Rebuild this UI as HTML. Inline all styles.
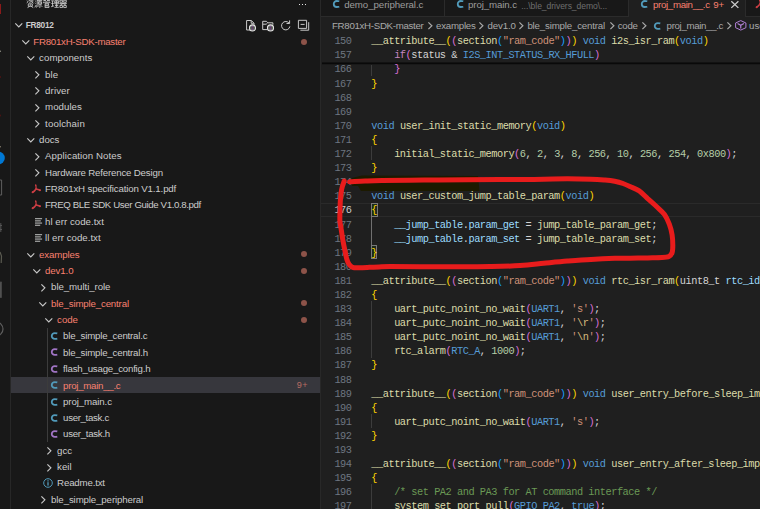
<!DOCTYPE html>
<html><head><meta charset="utf-8"><title>vscode</title>
<style>
html,body{margin:0;padding:0;width:760px;height:509px;overflow:hidden;background:#181818;}
#r{position:absolute;left:0;top:0;width:760px;height:509px;overflow:hidden;background:#181818;}
body{position:relative;font-family:"Liberation Sans",sans-serif;}
.abs{position:absolute;}
.t{position:absolute;white-space:pre;font-family:"Liberation Sans",sans-serif;}
.sb{font-size:9.7px;height:16.34px;line-height:16.34px;}
.m{position:absolute;z-index:2;white-space:pre;font-family:"Liberation Mono",monospace;}
svg{position:absolute;overflow:visible;}
</style></head><body><div id="r">

<div class="abs" style="left:0;top:0;width:10px;height:509px;background:#181818;"></div>
<div class="abs" style="left:10px;top:0;width:1px;height:509px;background:#272727;"></div>
<div class="abs" style="left:319.6px;top:0;width:1.2px;height:509px;background:#282828;"></div>
<div class="abs" style="left:320.8px;top:0;width:439.2px;height:509px;background:#1f1f1f;"></div>
<div class="abs" style="left:11px;top:377px;width:309px;height:16px;background:#37373d;"></div>
<div class="abs" style="left:47px;top:328px;width:1px;height:114px;background:#3c3c3c;"></div>
<div class="t sb" style="left:25.85px;top:17.38px;color:#cccccc;font-weight:bold;font-size:8.3px;letter-spacing:-0.314px;">FR8012</div>
<svg style="left:14.7px;top:23.45px" width="7.6" height="4.6" viewBox="0 0 7.6 4.6"><path d="M0.3 0.4 L3.8 3.9 L7.3 0.4" fill="none" stroke="#c8c8c8" stroke-width="1.15"/></svg>
<div class="t sb" style="left:33.35px;top:34.13px;color:#f88070;letter-spacing:-0.270px;">FR801xH-SDK-master</div>
<svg style="left:21.7px;top:40.199999999999996px" width="7.6" height="4.6" viewBox="0 0 7.6 4.6"><path d="M0.3 0.4 L3.8 3.9 L7.3 0.4" fill="none" stroke="#c8c8c8" stroke-width="1.15"/></svg>
<div class="t sb" style="left:39.10px;top:50.38px;color:#cccccc;letter-spacing:0.052px;">components</div>
<svg style="left:27.45px;top:56.449999999999996px" width="7.6" height="4.6" viewBox="0 0 7.6 4.6"><path d="M0.3 0.4 L3.8 3.9 L7.3 0.4" fill="none" stroke="#c8c8c8" stroke-width="1.15"/></svg>
<div class="t sb" style="left:45.10px;top:66.63px;color:#cccccc;letter-spacing:0.038px;">ble</div>
<svg style="left:34.8px;top:71.0px" width="4.6" height="7.6" viewBox="0 0 4.6 7.6"><path d="M0.4 0.3 L3.9 3.8 L0.4 7.3" fill="none" stroke="#c8c8c8" stroke-width="1.15"/></svg>
<div class="t sb" style="left:45.10px;top:82.88px;color:#cccccc;letter-spacing:0.094px;">driver</div>
<svg style="left:34.8px;top:87.25px" width="4.6" height="7.6" viewBox="0 0 4.6 7.6"><path d="M0.4 0.3 L3.9 3.8 L0.4 7.3" fill="none" stroke="#c8c8c8" stroke-width="1.15"/></svg>
<div class="t sb" style="left:45.10px;top:99.13px;color:#cccccc;letter-spacing:0.025px;">modules</div>
<svg style="left:34.8px;top:103.5px" width="4.6" height="7.6" viewBox="0 0 4.6 7.6"><path d="M0.4 0.3 L3.9 3.8 L0.4 7.3" fill="none" stroke="#c8c8c8" stroke-width="1.15"/></svg>
<div class="t sb" style="left:45.10px;top:115.63px;color:#cccccc;letter-spacing:0.113px;">toolchain</div>
<svg style="left:34.8px;top:120.0px" width="4.6" height="7.6" viewBox="0 0 4.6 7.6"><path d="M0.4 0.3 L3.9 3.8 L0.4 7.3" fill="none" stroke="#c8c8c8" stroke-width="1.15"/></svg>
<div class="t sb" style="left:39.10px;top:132.13px;color:#cccccc;letter-spacing:-0.042px;">docs</div>
<svg style="left:27.45px;top:138.20000000000002px" width="7.6" height="4.6" viewBox="0 0 7.6 4.6"><path d="M0.3 0.4 L3.8 3.9 L7.3 0.4" fill="none" stroke="#c8c8c8" stroke-width="1.15"/></svg>
<div class="t sb" style="left:45.10px;top:148.38px;color:#cccccc;letter-spacing:0.068px;">Application Notes</div>
<svg style="left:34.8px;top:152.75px" width="4.6" height="7.6" viewBox="0 0 4.6 7.6"><path d="M0.4 0.3 L3.9 3.8 L0.4 7.3" fill="none" stroke="#c8c8c8" stroke-width="1.15"/></svg>
<div class="t sb" style="left:45.10px;top:164.63px;color:#cccccc;letter-spacing:-0.177px;">Hardware Reference Design</div>
<svg style="left:34.8px;top:169.0px" width="4.6" height="7.6" viewBox="0 0 4.6 7.6"><path d="M0.4 0.3 L3.9 3.8 L0.4 7.3" fill="none" stroke="#c8c8c8" stroke-width="1.15"/></svg>
<div class="t sb" style="left:45.10px;top:181.13px;color:#cccccc;letter-spacing:-0.155px;">FR801xH specification V1.1.pdf</div>
<svg style="left:24.30px;top:182.70px" width="12" height="12" viewBox="-12 -6 12 12"><g fill="none" stroke="#cc3e44" stroke-linecap="round"><path d="M-0.3 -4.0 Q0.4 -1.6 0 0" stroke-width="1.2"/><path d="M0 0 Q-1.4 2.3 -3.5 3.3" stroke-width="1.5"/><path d="M0 0 Q2 0.3 4.1 1.3" stroke-width="1.5"/></g><circle cx="-3.3" cy="3.2" r="1.0" fill="#cc3e44"/><circle cx="3.9" cy="1.25" r="1.0" fill="#cc3e44"/><circle cx="-0.3" cy="-3.8" r="0.75" fill="#cc3e44"/></svg>
<div class="t sb" style="left:45.10px;top:197.38px;color:#cccccc;letter-spacing:-0.391px;">FREQ BLE SDK User Guide V1.0.8.pdf</div>
<svg style="left:24.30px;top:198.95px" width="12" height="12" viewBox="-12 -6 12 12"><g fill="none" stroke="#cc3e44" stroke-linecap="round"><path d="M-0.3 -4.0 Q0.4 -1.6 0 0" stroke-width="1.2"/><path d="M0 0 Q-1.4 2.3 -3.5 3.3" stroke-width="1.5"/><path d="M0 0 Q2 0.3 4.1 1.3" stroke-width="1.5"/></g><circle cx="-3.3" cy="3.2" r="1.0" fill="#cc3e44"/><circle cx="3.9" cy="1.25" r="1.0" fill="#cc3e44"/><circle cx="-0.3" cy="-3.8" r="0.75" fill="#cc3e44"/></svg>
<div class="t sb" style="left:45.10px;top:213.88px;color:#cccccc;letter-spacing:0.006px;">hl err code.txt</div>
<svg style="left:35.0px;top:217.55px" width="7.4" height="8" viewBox="0 0 7.4 8"><rect x="0" y="0.33" width="7.1" height="0.84" fill="#e2e4e3"/><rect x="0" y="2.48" width="5.8" height="0.84" fill="#e2e4e3"/><rect x="0" y="4.63" width="7.1" height="0.84" fill="#e2e4e3"/><rect x="0" y="6.78" width="5.2" height="0.84" fill="#e2e4e3"/></svg>
<div class="t sb" style="left:45.10px;top:230.13px;color:#cccccc;letter-spacing:0.006px;">ll err code.txt</div>
<svg style="left:35.0px;top:233.8px" width="7.4" height="8" viewBox="0 0 7.4 8"><rect x="0" y="0.33" width="7.1" height="0.84" fill="#e2e4e3"/><rect x="0" y="2.48" width="5.8" height="0.84" fill="#e2e4e3"/><rect x="0" y="4.63" width="7.1" height="0.84" fill="#e2e4e3"/><rect x="0" y="6.78" width="5.2" height="0.84" fill="#e2e4e3"/></svg>
<div class="t sb" style="left:39.10px;top:246.63px;color:#f88070;letter-spacing:-0.146px;">examples</div>
<svg style="left:27.45px;top:252.70000000000002px" width="7.6" height="4.6" viewBox="0 0 7.6 4.6"><path d="M0.3 0.4 L3.8 3.9 L7.3 0.4" fill="none" stroke="#c8c8c8" stroke-width="1.15"/></svg>
<div class="t sb" style="left:45.10px;top:262.88px;color:#f88070;letter-spacing:-0.132px;">dev1.0</div>
<svg style="left:33.2px;top:268.95px" width="7.6" height="4.6" viewBox="0 0 7.6 4.6"><path d="M0.3 0.4 L3.8 3.9 L7.3 0.4" fill="none" stroke="#c8c8c8" stroke-width="1.15"/></svg>
<div class="t sb" style="left:51.10px;top:279.13px;color:#cccccc;letter-spacing:-0.072px;">ble_multi_role</div>
<svg style="left:40.55px;top:283.5px" width="4.6" height="7.6" viewBox="0 0 4.6 7.6"><path d="M0.4 0.3 L3.9 3.8 L0.4 7.3" fill="none" stroke="#c8c8c8" stroke-width="1.15"/></svg>
<div class="t sb" style="left:51.10px;top:295.63px;color:#f88070;letter-spacing:-0.166px;">ble_simple_central</div>
<svg style="left:39.2px;top:301.7px" width="7.6" height="4.6" viewBox="0 0 7.6 4.6"><path d="M0.3 0.4 L3.8 3.9 L7.3 0.4" fill="none" stroke="#c8c8c8" stroke-width="1.15"/></svg>
<div class="t sb" style="left:57.10px;top:311.88px;color:#f88070;letter-spacing:-0.054px;">code</div>
<svg style="left:45.45px;top:317.95px" width="7.6" height="4.6" viewBox="0 0 7.6 4.6"><path d="M0.3 0.4 L3.8 3.9 L7.3 0.4" fill="none" stroke="#c8c8c8" stroke-width="1.15"/></svg>
<div class="t sb" style="left:63.10px;top:328.38px;color:#cccccc;letter-spacing:-0.201px;">ble_simple_central.c</div>
<svg style="left:54.30px;top:336.15px" width="1" height="1" viewBox="0 0 1 1"><path d="M3.3 -2.6 Q2.4 -2.85 0.75 -2.85 A3.0 2.85 0 0 0 -2.25 0 A3.0 2.85 0 0 0 0.75 2.85 Q2.4 2.85 3.3 2.6" fill="none" stroke="#519aba" stroke-width="1.8"/></svg>
<div class="t sb" style="left:63.10px;top:344.63px;color:#cccccc;letter-spacing:-0.203px;">ble_simple_central.h</div>
<svg style="left:54.30px;top:352.40px" width="1" height="1" viewBox="0 0 1 1"><path d="M3.3 -2.6 Q2.4 -2.85 0.75 -2.85 A3.0 2.85 0 0 0 -2.25 0 A3.0 2.85 0 0 0 0.75 2.85 Q2.4 2.85 3.3 2.6" fill="none" stroke="#a074c4" stroke-width="1.8"/></svg>
<div class="t sb" style="left:63.10px;top:361.13px;color:#cccccc;letter-spacing:-0.214px;">flash_usage_config.h</div>
<svg style="left:54.30px;top:368.90px" width="1" height="1" viewBox="0 0 1 1"><path d="M3.3 -2.6 Q2.4 -2.85 0.75 -2.85 A3.0 2.85 0 0 0 -2.25 0 A3.0 2.85 0 0 0 0.75 2.85 Q2.4 2.85 3.3 2.6" fill="none" stroke="#a074c4" stroke-width="1.8"/></svg>
<div class="t sb" style="left:63.10px;top:377.63px;color:#f88070;letter-spacing:-0.274px;">proj_main__.c</div>
<svg style="left:54.30px;top:385.40px" width="1" height="1" viewBox="0 0 1 1"><path d="M3.3 -2.6 Q2.4 -2.85 0.75 -2.85 A3.0 2.85 0 0 0 -2.25 0 A3.0 2.85 0 0 0 0.75 2.85 Q2.4 2.85 3.3 2.6" fill="none" stroke="#519aba" stroke-width="1.8"/></svg>
<div class="t sb" style="left:63.10px;top:393.88px;color:#cccccc;letter-spacing:-0.116px;">proj_main.c</div>
<svg style="left:54.30px;top:401.65px" width="1" height="1" viewBox="0 0 1 1"><path d="M3.3 -2.6 Q2.4 -2.85 0.75 -2.85 A3.0 2.85 0 0 0 -2.25 0 A3.0 2.85 0 0 0 0.75 2.85 Q2.4 2.85 3.3 2.6" fill="none" stroke="#519aba" stroke-width="1.8"/></svg>
<div class="t sb" style="left:63.10px;top:410.13px;color:#cccccc;letter-spacing:-0.341px;">user_task.c</div>
<svg style="left:54.30px;top:417.90px" width="1" height="1" viewBox="0 0 1 1"><path d="M3.3 -2.6 Q2.4 -2.85 0.75 -2.85 A3.0 2.85 0 0 0 -2.25 0 A3.0 2.85 0 0 0 0.75 2.85 Q2.4 2.85 3.3 2.6" fill="none" stroke="#519aba" stroke-width="1.8"/></svg>
<div class="t sb" style="left:63.10px;top:426.38px;color:#cccccc;letter-spacing:-0.299px;">user_task.h</div>
<svg style="left:54.30px;top:434.15px" width="1" height="1" viewBox="0 0 1 1"><path d="M3.3 -2.6 Q2.4 -2.85 0.75 -2.85 A3.0 2.85 0 0 0 -2.25 0 A3.0 2.85 0 0 0 0.75 2.85 Q2.4 2.85 3.3 2.6" fill="none" stroke="#a074c4" stroke-width="1.8"/></svg>
<div class="t sb" style="left:57.10px;top:442.63px;color:#cccccc;letter-spacing:-0.093px;">gcc</div>
<svg style="left:46.55px;top:447.0px" width="4.6" height="7.6" viewBox="0 0 4.6 7.6"><path d="M0.4 0.3 L3.9 3.8 L0.4 7.3" fill="none" stroke="#c8c8c8" stroke-width="1.15"/></svg>
<div class="t sb" style="left:57.10px;top:459.13px;color:#cccccc;letter-spacing:0.001px;">keil</div>
<svg style="left:46.55px;top:463.5px" width="4.6" height="7.6" viewBox="0 0 4.6 7.6"><path d="M0.4 0.3 L3.9 3.8 L0.4 7.3" fill="none" stroke="#c8c8c8" stroke-width="1.15"/></svg>
<div class="t sb" style="left:57.10px;top:475.38px;color:#cccccc;letter-spacing:-0.175px;">Readme.txt</div>
<svg style="left:42.7px;top:478.25px" width="10" height="10" viewBox="0 0 10 10"><circle cx="5" cy="5" r="4.3" fill="none" stroke="#519aba" stroke-width="1"/><rect x="4.4" y="4.2" width="1.2" height="3.4" fill="#5aa6c8"/><rect x="4.4" y="2.3" width="1.2" height="1.2" fill="#5aa6c8"/></svg>
<div class="t sb" style="left:51.10px;top:491.63px;color:#cccccc;letter-spacing:-0.130px;">ble_simple_peripheral</div>
<svg style="left:40.55px;top:496.0px" width="4.6" height="7.6" viewBox="0 0 4.6 7.6"><path d="M0.4 0.3 L3.9 3.8 L0.4 7.3" fill="none" stroke="#c8c8c8" stroke-width="1.15"/></svg>
<div class="abs" style="left:301px;top:38.5px;width:6px;height:6px;border-radius:50%;background:#8d5349;"></div>
<div class="abs" style="left:301px;top:250.8px;width:6px;height:6px;border-radius:50%;background:#8d5349;"></div>
<div class="abs" style="left:301px;top:267.5px;width:6px;height:6px;border-radius:50%;background:#8d5349;"></div>
<div class="abs" style="left:301px;top:300.2px;width:6px;height:6px;border-radius:50%;background:#8d5349;"></div>
<div class="abs" style="left:301px;top:316.5px;width:6px;height:6px;border-radius:50%;background:#8d5349;"></div>
<div class="t sb" style="left:296.7px;top:377.43px;color:#b86c62;font-size:9px;letter-spacing:0.517px;">9+</div>
<div class="abs" style="left:321px;top:0;width:439px;height:16px;background:#181818;"></div>
<div class="abs" style="left:321px;top:15.5px;width:439px;height:1px;background:#2b2b2b;"></div>
<div class="abs" style="left:444px;top:0;width:1px;height:16px;background:#2b2b2b;"></div>
<div class="abs" style="left:628.8px;top:0;width:116.2px;height:17px;background:#1f1f1f;"></div>
<div class="abs" style="left:627.8px;top:0;width:1px;height:16px;background:#2b2b2b;"></div>
<div class="abs" style="left:745px;top:0;width:1px;height:16px;background:#2b2b2b;"></div>
<svg style="left:335.60px;top:3.50px" width="1" height="1" viewBox="0 0 1 1"><path d="M3.3 -2.75 Q2.4 -3.0 0.75 -3.0 A3.0 3.0 0 0 0 -2.25 0 A3.0 3.0 0 0 0 0.75 3.0 Q2.4 3.0 3.3 2.75" fill="none" stroke="#519aba" stroke-width="1.8"/></svg>
<div class="t" style="left:344.20px;top:-2.90px;height:16px;line-height:16px;font-size:9.7px;color:#9d9d9d;letter-spacing:-0.062px;">demo_peripheral.c</div>
<svg style="left:459.80px;top:3.50px" width="1" height="1" viewBox="0 0 1 1"><path d="M3.3 -2.75 Q2.4 -3.0 0.75 -3.0 A3.0 3.0 0 0 0 -2.25 0 A3.0 3.0 0 0 0 0.75 3.0 Q2.4 3.0 3.3 2.75" fill="none" stroke="#519aba" stroke-width="1.8"/></svg>
<div class="t" style="left:468.10px;top:-2.90px;height:16px;line-height:16px;font-size:9.7px;color:#9d9d9d;letter-spacing:-0.116px;">proj_main.c</div>
<div class="t" style="left:521.30px;top:-2.50px;height:16px;line-height:16px;font-size:8.6px;color:#6e6e6e;letter-spacing:-0.068px;">...\ble_drivers_demo\...</div>
<svg style="left:644.20px;top:3.50px" width="1" height="1" viewBox="0 0 1 1"><path d="M3.3 -2.75 Q2.4 -3.0 0.75 -3.0 A3.0 3.0 0 0 0 -2.25 0 A3.0 3.0 0 0 0 0.75 3.0 Q2.4 3.0 3.3 2.75" fill="none" stroke="#519aba" stroke-width="1.8"/></svg>
<div class="t" style="left:652.90px;top:-2.90px;height:16px;line-height:16px;font-size:9.7px;color:#f88070;letter-spacing:-0.305px;">proj_main__.c</div>
<div class="t" style="left:713.30px;top:-2.90px;height:16px;line-height:16px;font-size:9.7px;color:#f88070;letter-spacing:-0.123px;">9+</div>
<svg style="left:731px;top:0.8px" width="7.7" height="7.2" viewBox="0 0 7.7 7.2"><path d="M0.3 0.3 L7.4 6.9 M7.4 0.3 L0.3 6.9" stroke="#cccccc" stroke-width="1.3" fill="none"/></svg>
<svg style="left:748.40px;top:-2.30px" width="12" height="12" viewBox="-12 -6 12 12"><g fill="none" stroke="#cc3e44" stroke-linecap="round"><path d="M-0.3 -4.0 Q0.4 -1.6 0 0" stroke-width="1.2"/><path d="M0 0 Q-1.4 2.3 -3.5 3.3" stroke-width="1.5"/><path d="M0 0 Q2 0.3 4.1 1.3" stroke-width="1.5"/></g><circle cx="-3.3" cy="3.2" r="1.0" fill="#cc3e44"/><circle cx="3.9" cy="1.25" r="1.0" fill="#cc3e44"/><circle cx="-0.3" cy="-3.8" r="0.75" fill="#cc3e44"/></svg>
<div class="t" style="left:332.00px;top:17.60px;height:16px;line-height:16px;font-size:9.7px;color:#a9a9a9;letter-spacing:-0.300px;">FR801xH-SDK-master</div>
<svg style="left:428.2px;top:21.700000000000003px" width="4.6" height="7.6" viewBox="0 0 4.6 7.6"><path d="M0.4 0.4 L3.9 3.8 L0.4 7.2" fill="none" stroke="#a9a9a9" stroke-width="1.2"/></svg>
<div class="t" style="left:436.00px;top:17.60px;height:16px;line-height:16px;font-size:9.7px;color:#a9a9a9;letter-spacing:-0.234px;">examples</div>
<svg style="left:478.8px;top:21.700000000000003px" width="4.6" height="7.6" viewBox="0 0 4.6 7.6"><path d="M0.4 0.4 L3.9 3.8 L0.4 7.2" fill="none" stroke="#a9a9a9" stroke-width="1.2"/></svg>
<div class="t" style="left:487.50px;top:17.60px;height:16px;line-height:16px;font-size:9.7px;color:#a9a9a9;letter-spacing:-0.116px;">dev1.0</div>
<svg style="left:519.4000000000001px;top:21.700000000000003px" width="4.6" height="7.6" viewBox="0 0 4.6 7.6"><path d="M0.4 0.4 L3.9 3.8 L0.4 7.2" fill="none" stroke="#a9a9a9" stroke-width="1.2"/></svg>
<div class="t" style="left:527.40px;top:17.60px;height:16px;line-height:16px;font-size:9.7px;color:#a9a9a9;letter-spacing:-0.177px;">ble_simple_central</div>
<svg style="left:609.8000000000001px;top:21.700000000000003px" width="4.6" height="7.6" viewBox="0 0 4.6 7.6"><path d="M0.4 0.4 L3.9 3.8 L0.4 7.2" fill="none" stroke="#a9a9a9" stroke-width="1.2"/></svg>
<div class="t" style="left:617.70px;top:17.60px;height:16px;line-height:16px;font-size:9.7px;color:#a9a9a9;letter-spacing:-0.254px;">code</div>
<svg style="left:642.1px;top:21.700000000000003px" width="4.6" height="7.6" viewBox="0 0 4.6 7.6"><path d="M0.4 0.4 L3.9 3.8 L0.4 7.2" fill="none" stroke="#a9a9a9" stroke-width="1.2"/></svg>
<svg style="left:657.20px;top:25.70px" width="1" height="1" viewBox="0 0 1 1"><path d="M3.3 -2.6 Q2.4 -2.85 0.75 -2.85 A3.0 2.85 0 0 0 -2.25 0 A3.0 2.85 0 0 0 0.75 2.85 Q2.4 2.85 3.3 2.6" fill="none" stroke="#519aba" stroke-width="1.8"/></svg>
<div class="t" style="left:666.60px;top:17.60px;height:16px;line-height:16px;font-size:9.7px;color:#a9a9a9;letter-spacing:-0.335px;">proj_main__.c</div>
<svg style="left:727.4000000000001px;top:21.700000000000003px" width="4.6" height="7.6" viewBox="0 0 4.6 7.6"><path d="M0.4 0.4 L3.9 3.8 L0.4 7.2" fill="none" stroke="#a9a9a9" stroke-width="1.2"/></svg>
<svg style="left:735.2px;top:20px" width="11.5" height="10.7" viewBox="0 0 11.5 10.7"><path d="M5.75 0.6 L10.9 3 L10.9 7.7 L5.75 10.1 L0.6 7.7 L0.6 3 Z" fill="none" stroke="#b180d7" stroke-width="1" stroke-linejoin="round"/><path d="M2.6 3.6 L5.75 5.4 L8.9 3.6 M5.75 5.4 L5.75 8.6" fill="none" stroke="#b180d7" stroke-width="1.2"/></svg>
<div class="t" style="left:749.10px;top:17.60px;height:16px;line-height:16px;font-size:9.7px;color:#a9a9a9;letter-spacing:0.000px;">user_custom_jump_table_param</div>
<style>.m{font-size:10.3px;letter-spacing:-0.4680px;height:14.097px;line-height:14.097px;}.ln{color:#6e7681;text-align:right;width:30px;left:321.53px;}</style>
<div class="abs" style="left:321px;top:203px;width:439px;height:1px;background:#2a2a2a;"></div>
<div class="abs" style="left:321px;top:216px;width:439px;height:1px;background:#2a2a2a;"></div>
<div class="m ln" style="top:34.45px;color:#6e7681;">150</div>
<div class="m" style="left:371.3px;top:34.45px;"><span style="color:#dcdcaa">__attribute__</span><span style="color:#ffd700">(</span><span style="color:#da70d6">(</span><span style="color:#dcdcaa">section</span><span style="color:#179fff">(</span><span style="color:#ce9178">&quot;ram_code&quot;</span><span style="color:#179fff">)</span><span style="color:#da70d6">)</span><span style="color:#ffd700">)</span><span style="color:#d4d4d4"> </span><span style="color:#569cd6">void</span><span style="color:#d4d4d4"> </span><span style="color:#dcdcaa">i2s_isr_ram</span><span style="color:#ffd700">(</span><span style="color:#569cd6">void</span><span style="color:#ffd700">)</span></div>
<div class="m ln" style="top:48.35px;color:#6e7681;">157</div>
<div class="m" style="left:371.3px;top:48.35px;"><span style="color:#d4d4d4">    </span><span style="color:#c586c0">if</span><span style="color:#da70d6">(</span><span style="color:#d4d4d4">status &amp; </span><span style="color:#569cd6">I2S_INT_STATUS_RX_HFULL</span><span style="color:#da70d6">)</span></div>
<div class="m ln" style="top:62.45px;color:#6e7681;">166</div>
<div class="m" style="left:371.3px;top:62.45px;"><span style="color:#d4d4d4">    </span><span style="color:#da70d6">}</span></div>
<div class="m ln" style="top:76.55px;color:#6e7681;">167</div>
<div class="m" style="left:371.3px;top:76.55px;"><span style="color:#ffd700">}</span></div>
<div class="m ln" style="top:90.65px;color:#6e7681;">168</div>
<div class="m ln" style="top:104.74px;color:#6e7681;">169</div>
<div class="m ln" style="top:118.84px;color:#6e7681;">170</div>
<div class="m" style="left:371.3px;top:118.84px;"><span style="color:#569cd6">void</span><span style="color:#d4d4d4"> </span><span style="color:#dcdcaa">user_init_static_memory</span><span style="color:#ffd700">(</span><span style="color:#569cd6">void</span><span style="color:#ffd700">)</span></div>
<div class="m ln" style="top:132.94px;color:#6e7681;">171</div>
<div class="m" style="left:371.3px;top:132.94px;"><span style="color:#ffd700">{</span></div>
<div class="m ln" style="top:147.03px;color:#6e7681;">172</div>
<div class="m" style="left:371.3px;top:147.03px;"><span style="color:#d4d4d4">    </span><span style="color:#dcdcaa">initial_static_memory</span><span style="color:#da70d6">(</span><span style="color:#b5cea8">6</span><span style="color:#d4d4d4">, </span><span style="color:#b5cea8">2</span><span style="color:#d4d4d4">, </span><span style="color:#b5cea8">3</span><span style="color:#d4d4d4">, </span><span style="color:#b5cea8">8</span><span style="color:#d4d4d4">, </span><span style="color:#b5cea8">256</span><span style="color:#d4d4d4">, </span><span style="color:#b5cea8">10</span><span style="color:#d4d4d4">, </span><span style="color:#b5cea8">256</span><span style="color:#d4d4d4">, </span><span style="color:#b5cea8">254</span><span style="color:#d4d4d4">, </span><span style="color:#b5cea8">0x800</span><span style="color:#da70d6">)</span><span style="color:#d4d4d4">;</span></div>
<div class="m ln" style="top:161.13px;color:#6e7681;">173</div>
<div class="m" style="left:371.3px;top:161.13px;"><span style="color:#ffd700">}</span></div>
<div class="m ln" style="top:175.23px;color:#6e7681;">174</div>
<div class="m ln" style="top:189.32px;color:#6e7681;">175</div>
<div class="m" style="left:371.3px;top:189.32px;"><span style="color:#569cd6">void</span><span style="color:#d4d4d4"> </span><span style="color:#dcdcaa">user_custom_jump_table_param</span><span style="color:#ffd700">(</span><span style="color:#569cd6">void</span><span style="color:#ffd700">)</span></div>
<div class="m ln" style="top:203.42px;color:#cccccc;">176</div>
<div class="m" style="left:371.3px;top:203.42px;"><span style="color:#ffd700">{</span></div>
<div class="m ln" style="top:217.52px;color:#6e7681;">177</div>
<div class="m" style="left:371.3px;top:217.52px;"><span style="color:#d4d4d4">    </span><span style="color:#9cdcfe">__jump_table</span><span style="color:#d4d4d4">.</span><span style="color:#9cdcfe">param_get</span><span style="color:#d4d4d4"> = </span><span style="color:#dcdcaa">jump_table_param_get</span><span style="color:#d4d4d4">;</span></div>
<div class="m ln" style="top:231.62px;color:#6e7681;">178</div>
<div class="m" style="left:371.3px;top:231.62px;"><span style="color:#d4d4d4">    </span><span style="color:#9cdcfe">__jump_table</span><span style="color:#d4d4d4">.</span><span style="color:#9cdcfe">param_set</span><span style="color:#d4d4d4"> = </span><span style="color:#dcdcaa">jump_table_param_set</span><span style="color:#d4d4d4">;</span></div>
<div class="m ln" style="top:245.71px;color:#6e7681;">179</div>
<div class="m" style="left:371.3px;top:245.71px;"><span style="color:#ffd700">}</span></div>
<div class="m ln" style="top:259.81px;color:#6e7681;">180</div>
<div class="m ln" style="top:273.91px;color:#6e7681;">181</div>
<div class="m" style="left:371.3px;top:273.91px;"><span style="color:#dcdcaa">__attribute__</span><span style="color:#ffd700">(</span><span style="color:#da70d6">(</span><span style="color:#dcdcaa">section</span><span style="color:#179fff">(</span><span style="color:#ce9178">&quot;ram_code&quot;</span><span style="color:#179fff">)</span><span style="color:#da70d6">)</span><span style="color:#ffd700">)</span><span style="color:#d4d4d4"> </span><span style="color:#569cd6">void</span><span style="color:#d4d4d4"> </span><span style="color:#dcdcaa">rtc_isr_ram</span><span style="color:#ffd700">(</span><span style="color:#d4d4d4">uint8_t</span><span style="color:#d4d4d4"> </span><span style="color:#9cdcfe">rtc_idx</span><span style="color:#ffd700">)</span></div>
<div class="m ln" style="top:288.00px;color:#6e7681;">182</div>
<div class="m" style="left:371.3px;top:288.00px;"><span style="color:#ffd700">{</span></div>
<div class="m ln" style="top:302.10px;color:#6e7681;">183</div>
<div class="m" style="left:371.3px;top:302.10px;"><span style="color:#d4d4d4">    </span><span style="color:#dcdcaa">uart_putc_noint_no_wait</span><span style="color:#da70d6">(</span><span style="color:#569cd6">UART1</span><span style="color:#d4d4d4">, </span><span style="color:#ce9178">&#x27;s&#x27;</span><span style="color:#da70d6">)</span><span style="color:#d4d4d4">;</span></div>
<div class="m ln" style="top:316.20px;color:#6e7681;">184</div>
<div class="m" style="left:371.3px;top:316.20px;"><span style="color:#d4d4d4">    </span><span style="color:#dcdcaa">uart_putc_noint_no_wait</span><span style="color:#da70d6">(</span><span style="color:#569cd6">UART1</span><span style="color:#d4d4d4">, </span><span style="color:#ce9178">&#x27;</span><span style="color:#d7ba7d">\r</span><span style="color:#ce9178">&#x27;</span><span style="color:#da70d6">)</span><span style="color:#d4d4d4">;</span></div>
<div class="m ln" style="top:330.29px;color:#6e7681;">185</div>
<div class="m" style="left:371.3px;top:330.29px;"><span style="color:#d4d4d4">    </span><span style="color:#dcdcaa">uart_putc_noint_no_wait</span><span style="color:#da70d6">(</span><span style="color:#569cd6">UART1</span><span style="color:#d4d4d4">, </span><span style="color:#ce9178">&#x27;</span><span style="color:#d7ba7d">\n</span><span style="color:#ce9178">&#x27;</span><span style="color:#da70d6">)</span><span style="color:#d4d4d4">;</span></div>
<div class="m ln" style="top:344.39px;color:#6e7681;">186</div>
<div class="m" style="left:371.3px;top:344.39px;"><span style="color:#d4d4d4">    </span><span style="color:#dcdcaa">rtc_alarm</span><span style="color:#da70d6">(</span><span style="color:#569cd6">RTC_A</span><span style="color:#d4d4d4">, </span><span style="color:#b5cea8">1000</span><span style="color:#da70d6">)</span><span style="color:#d4d4d4">;</span></div>
<div class="m ln" style="top:358.49px;color:#6e7681;">187</div>
<div class="m" style="left:371.3px;top:358.49px;"><span style="color:#ffd700">}</span></div>
<div class="m ln" style="top:372.59px;color:#6e7681;">188</div>
<div class="m ln" style="top:386.68px;color:#6e7681;">189</div>
<div class="m" style="left:371.3px;top:386.68px;"><span style="color:#dcdcaa">__attribute__</span><span style="color:#ffd700">(</span><span style="color:#da70d6">(</span><span style="color:#dcdcaa">section</span><span style="color:#179fff">(</span><span style="color:#ce9178">&quot;ram_code&quot;</span><span style="color:#179fff">)</span><span style="color:#da70d6">)</span><span style="color:#ffd700">)</span><span style="color:#d4d4d4"> </span><span style="color:#569cd6">void</span><span style="color:#d4d4d4"> </span><span style="color:#dcdcaa">user_entry_before_sleep_imp</span><span style="color:#ffd700">(</span><span style="color:#569cd6">void</span><span style="color:#ffd700">)</span></div>
<div class="m ln" style="top:400.78px;color:#6e7681;">190</div>
<div class="m" style="left:371.3px;top:400.78px;"><span style="color:#ffd700">{</span></div>
<div class="m ln" style="top:414.88px;color:#6e7681;">191</div>
<div class="m" style="left:371.3px;top:414.88px;"><span style="color:#d4d4d4">    </span><span style="color:#dcdcaa">uart_putc_noint_no_wait</span><span style="color:#da70d6">(</span><span style="color:#569cd6">UART1</span><span style="color:#d4d4d4">, </span><span style="color:#ce9178">&#x27;s&#x27;</span><span style="color:#da70d6">)</span><span style="color:#d4d4d4">;</span></div>
<div class="m ln" style="top:428.97px;color:#6e7681;">192</div>
<div class="m" style="left:371.3px;top:428.97px;"><span style="color:#ffd700">}</span></div>
<div class="m ln" style="top:443.07px;color:#6e7681;">193</div>
<div class="m ln" style="top:457.17px;color:#6e7681;">194</div>
<div class="m" style="left:371.3px;top:457.17px;"><span style="color:#dcdcaa">__attribute__</span><span style="color:#ffd700">(</span><span style="color:#da70d6">(</span><span style="color:#dcdcaa">section</span><span style="color:#179fff">(</span><span style="color:#ce9178">&quot;ram_code&quot;</span><span style="color:#179fff">)</span><span style="color:#da70d6">)</span><span style="color:#ffd700">)</span><span style="color:#d4d4d4"> </span><span style="color:#569cd6">void</span><span style="color:#d4d4d4"> </span><span style="color:#dcdcaa">user_entry_after_sleep_imp</span><span style="color:#ffd700">(</span><span style="color:#569cd6">void</span><span style="color:#ffd700">)</span></div>
<div class="m ln" style="top:471.26px;color:#6e7681;">195</div>
<div class="m" style="left:371.3px;top:471.26px;"><span style="color:#ffd700">{</span></div>
<div class="m ln" style="top:485.36px;color:#6e7681;">196</div>
<div class="m" style="left:371.3px;top:485.36px;"><span style="color:#d4d4d4">    </span><span style="color:#6a9955">/* set PA2 and PA3 for AT command interface */</span></div>
<div class="m ln" style="top:499.46px;color:#6e7681;">197</div>
<div class="m" style="left:371.3px;top:499.46px;"><span style="color:#d4d4d4">    </span><span style="color:#dcdcaa">system_set_port_pull</span><span style="color:#da70d6">(</span><span style="color:#569cd6">GPIO_PA2</span><span style="color:#d4d4d4">, </span><span style="color:#569cd6">true</span><span style="color:#da70d6">)</span><span style="color:#d4d4d4">;</span></div>
<div class="m ln" style="top:513.56px;color:#6e7681;">198</div>
<div class="abs" style="left:371px;top:62px;width:1px;height:13.65px;background:#3c3c3c;"></div>
<div class="abs" style="left:371px;top:146.13px;width:1px;height:14.10px;background:#3c3c3c;"></div>
<div class="abs" style="left:371px;top:216.62px;width:1px;height:28.19px;background:#707070;"></div>
<div class="abs" style="left:371px;top:301.20px;width:1px;height:56.39px;background:#3c3c3c;"></div>
<div class="abs" style="left:371px;top:413.98px;width:1px;height:14.10px;background:#3c3c3c;"></div>
<div class="abs" style="left:371px;top:484.46px;width:1px;height:42.29px;background:#3c3c3c;"></div>
<div class="abs" style="left:321.5px;top:61.6px;width:439px;height:1.1px;background:#121212;"></div>
<div class="abs" style="left:321.5px;top:62.6px;width:439px;height:1px;background:#090909;"></div>
<div class="abs" style="left:321.5px;top:63.6px;width:439px;height:0.6px;background:#191919;"></div>
<div class="abs" style="left:371px;top:202.8px;width:7.2px;height:13.9px;border:0.8px solid #7a7a7a;background:#1c2a1c;box-sizing:border-box;"></div>
<div class="abs" style="left:371.2px;top:245.2px;width:5.9px;height:14.1px;border:0.8px solid #7a7a7a;background:#1c2a1c;box-sizing:border-box;"></div>
<svg style="left:0;top:0" width="760" height="509" viewBox="0 0 760 509"><path d="M352 178 L362 175.5 L478 176 L479.5 191 L361 191 L358 186 L352 186 Z" fill="#1c1a00"/></svg>
<svg style="left:0;top:0;z-index:5" width="760" height="509" viewBox="0 0 760 509"><path d="M349.6 181.8 C352.2 181.7 359.6 181.2 365.0 181.0 C370.4 180.8 372.2 180.7 382.0 180.5 C391.8 180.3 410.0 180.2 424.0 180.1 C438.0 180.0 453.3 179.8 466.0 179.7 C478.7 179.6 491.0 179.4 500.0 179.4 C509.0 179.4 512.7 179.6 520.0 179.6 C527.3 179.6 535.8 179.3 543.7 179.2 C551.6 179.1 559.5 178.8 567.4 178.8 C575.3 178.8 584.7 179.0 591.0 179.2 C597.3 179.4 601.0 179.7 605.0 180.0 C609.0 180.3 611.7 180.6 614.7 181.2 C617.7 181.8 620.5 182.6 623.0 183.5 C625.5 184.4 627.4 185.3 630.0 186.5 C632.6 187.7 635.8 188.6 638.8 190.6 C641.8 192.6 644.8 195.9 647.7 198.6 C650.7 201.2 653.7 203.8 656.5 206.5 C659.3 209.2 662.4 211.6 664.5 214.5 C666.6 217.4 668.0 220.8 669.3 224.2 C670.6 227.6 671.5 231.3 672.1 234.9 C672.7 238.5 672.8 242.6 672.8 245.5 C672.8 248.4 672.8 250.8 672.1 252.6 C671.5 254.4 670.6 255.7 668.9 256.5 C667.2 257.3 665.4 257.4 661.9 257.6 C658.4 257.8 653.0 257.8 647.7 257.9 C642.4 258.0 635.5 258.2 630.0 258.3 C624.5 258.4 621.2 258.1 614.7 258.3 C608.2 258.5 598.9 258.9 591.0 259.4 C583.1 259.8 575.3 260.4 567.4 261.0 C559.5 261.6 551.6 262.5 543.7 263.3 C535.8 264.1 529.0 265.1 520.0 265.6 C511.1 266.2 500.0 266.4 490.0 266.6 C480.0 266.8 471.7 266.8 460.0 266.8 C448.3 266.8 431.7 266.8 420.0 266.8 C408.3 266.8 396.8 266.6 390.0 266.6 C383.2 266.6 382.4 266.8 379.0 266.9 C375.6 267.0 372.6 267.1 369.3 267.3 C366.1 267.5 362.3 267.8 359.5 267.8 C356.7 267.8 354.3 268.0 352.6 267.4 C350.9 266.8 350.1 265.7 349.2 264.4 C348.2 263.1 347.6 262.0 346.9 259.5 C346.1 257.0 345.4 252.9 344.7 249.6 C344.0 246.3 343.4 243.1 342.8 239.8 C342.2 236.5 341.8 233.1 341.3 230.0 C340.8 226.9 340.1 224.1 339.9 221.0 C339.7 217.9 339.9 214.6 340.0 211.3 C340.1 208.1 340.1 204.8 340.3 201.5 C340.5 198.2 341.0 194.1 341.3 191.6 C341.6 189.1 341.8 188.5 342.3 186.7 C342.8 184.9 343.9 181.9 344.2 181.0" fill="none" stroke="#e81c1c" stroke-width="5" stroke-linecap="round" stroke-linejoin="round"/></svg>
<svg style="left:0;top:0" width="80" height="10" viewBox="0 0 80 10"><g stroke="#d4d4d4" stroke-width="0.82" fill="none" opacity="1"><path transform="translate(26.30,-0.15)" d="M0.5 0.9 L1.5 1.7 M0.4 3.1 L1.6 2.2 M3.1 0.2 L2.4 1.6 M3 0.9 H6.9 L6.3 1.9 M4.7 1.4 L3 3.4 M4.7 1.6 L7.2 3.4 M2 4 H6 V6.4 H2 Z M4 4.4 V6 M3.4 6.4 L1.2 7.8 M4.8 6.4 L6.9 7.8"/><path transform="translate(34.50,-0.15)" d="M0.4 0.8 L1.3 1.5 M0.3 3 L1.2 3.6 M0.3 7.5 L1.6 5.2 M2.4 0.6 H7.7 M2.7 0.6 V4.5 Q2.6 6.5 1.9 7.7 M5.2 0.8 L4.7 1.8 M3.9 1.9 H7.1 V4.4 H3.9 Z M3.9 3.15 H7.1 M5.5 4.4 V7.7 L4.8 7.2 M4.1 5.6 L3.3 7 M6.7 5.6 L7.7 7"/><path transform="translate(42.70,-0.15)" d="M1.6 0 L0.8 1.4 M1.2 0.7 H3.4 M2.4 0.8 L2.8 1.5 M5.2 0 L4.4 1.4 M4.8 0.7 H7.4 M6 0.8 L6.4 1.5 M4 1.6 V2.3 M0.8 3.3 V2.4 H7.2 V3.3 M2.4 3.5 V7.8 M2.4 3.5 H5.8 V5.2 H2.4 M2.4 6 H6.3 V7.6 H2.4"/><path transform="translate(50.90,-0.15)" d="M0.3 1 H3 M0.4 3.6 H2.9 M0.2 6.9 L3.1 6 M1.65 1 V6.4 M3.9 0.8 H7.5 V4 H3.9 Z M3.9 2.4 H7.5 M5.7 0.8 V7.4 M4.1 5.6 H7.3 M3.5 7.45 H7.9"/><path transform="translate(59.10,-0.15)" d="M0.8 0.4 H3.4 V2.4 H0.8 Z M4.6 0.4 H7.2 V2.4 H4.6 Z M0.3 3.7 H7.7 M4 2.6 V3.7 L1.2 5.2 M4 3.7 L6.8 5.2 M6.1 2.7 L6.7 3.2 M0.8 5.7 H3.4 V7.7 H0.8 Z M4.6 5.7 H7.2 V7.7 H4.6 Z"/></g></svg>
<div class="abs" style="left:298.9px;top:3.8px;width:1.4px;height:1.4px;background:#e4e4e4;"></div>
<div class="abs" style="left:302.0px;top:3.8px;width:1.4px;height:1.4px;background:#e4e4e4;"></div>
<div class="abs" style="left:305.1px;top:3.8px;width:1.4px;height:1.4px;background:#e4e4e4;"></div>
<svg style="left:0;top:0" width="330" height="40" viewBox="0 0 330 40"><g fill="none" stroke="#c8c8c8" stroke-width="1"><path d="M250.2 30.0 H246.6 V20.5 H251.4 L254.0 23.2 V24.8 M251.2 20.7 V23.3 H253.8"/><circle cx="252.5" cy="27.9" r="3.05" fill="#686868" stroke="#e6e6e6" stroke-width="1.05"/><path d="M252.5 26.0 V29.799999999999997" stroke="#7d3f93" stroke-width="0.9"/><path d="M250.6 27.9 H254.4" stroke="#3c3c3c" stroke-width="0.8"/><path d="M267.4 29.6 H262.7 V21.3 H266.4 L267.8 22.8 H272.9 V24.8 M262.9 24.2 H266.2 L267.6 22.9"/><circle cx="270.5" cy="27.9" r="3.05" fill="#686868" stroke="#e6e6e6" stroke-width="1.05"/><path d="M270.5 26.0 V29.799999999999997" stroke="#7d3f93" stroke-width="0.9"/><path d="M268.6 27.9 H272.4" stroke="#3c3c3c" stroke-width="0.8"/><path d="M289.2 23.3 A4.2 4.2 0 1 0 289.9 26.4 M289.6 20.4 V23.5 H286.5"/><path d="M298.4 20.3 H306.6 V28.4 H298.4 Z M300.4 30.2 H308.7 V22.2 M300.6 24.4 H304.6"/></g></svg>
<div class="abs" style="left:0;top:4px;width:1.3px;height:10px;background:#8a1a1a;"></div>
<svg style="left:0;top:0" width="11" height="509" viewBox="0 0 11 509"><circle cx="-1.6" cy="158" r="6.4" fill="#0078d4"/><circle cx="0.3" cy="51.3" r="0.8" fill="#8a8a80"/><circle cx="0.2" cy="146.8" r="0.8" fill="#8a8070"/><circle cx="0.2" cy="77" r="0.9" fill="#4a1414"/><circle cx="0.2" cy="115.5" r="0.9" fill="#4a1414"/><path d="M0 180 H1.6 V195 H0" fill="none" stroke="#5e5e5e" stroke-width="1"/><path d="M0.8 223 V232 M0 225.5 H2 M0 229.5 H2" fill="none" stroke="#555" stroke-width="1"/><path d="M0 252 L1.5 256 L1.2 263" fill="none" stroke="#5a5a50" stroke-width="1.2"/><rect x="0" y="281.5" width="1.8" height="16.5" rx="0.8" fill="#505050"/><circle cx="-4" cy="329" r="7" fill="none" stroke="#5e5e5e" stroke-width="1.2"/></svg>
</div></body></html>
